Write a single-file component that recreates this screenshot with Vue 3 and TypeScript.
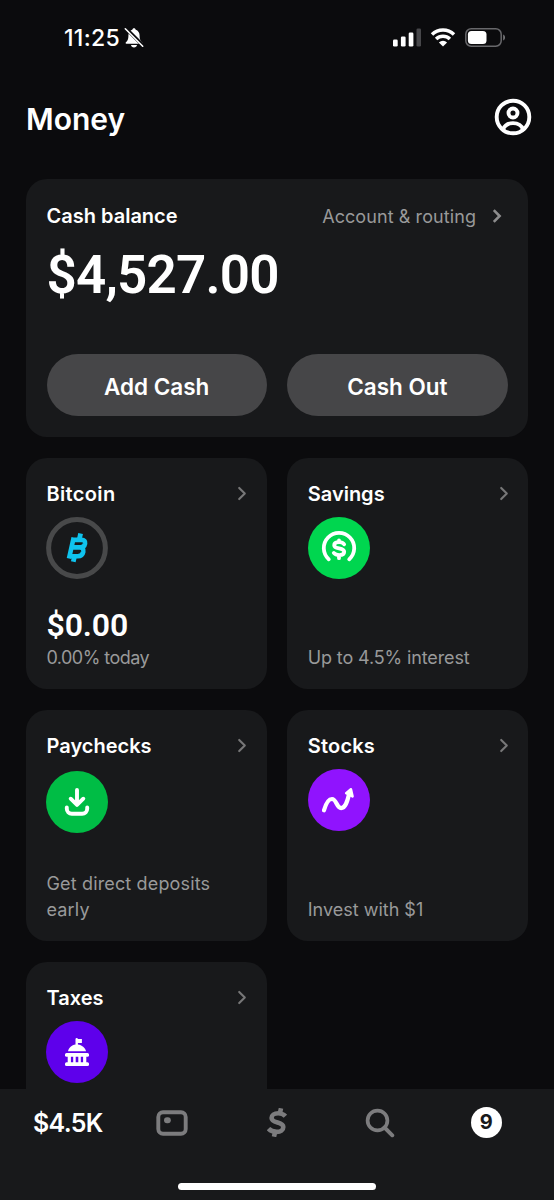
<script setup lang="ts">
type IconName = 'bitcoin' | 'savings' | 'paychecks' | 'stocks' | 'taxes'

interface Tile {
  id: IconName
  title: string
  amount?: string
  note?: string
}

const tiles: Tile[] = [
  { id: 'bitcoin', title: 'Bitcoin', amount: '$0.00', note: '0.00% today' },
  { id: 'savings', title: 'Savings', note: 'Up to 4.5% interest' },
  { id: 'paychecks', title: 'Paychecks', note: 'Get direct deposits early' },
  { id: 'stocks', title: 'Stocks', note: 'Invest with $1' },
  { id: 'taxes', title: 'Taxes' },
]
</script>

<template>
  <div class="screen">
    <div class="status">
      <div class="clock">
        <span>11:25</span>
        <svg class="bell" width="20" height="22" viewBox="0 0 20 22">
          <path d="M10 1.200c.9 0 1.600.6 1.700 1.500 2.500.8 3.900 3 3.900 5.800 0 4 .9 5.300 2.500 6.800.5.6.4 1.500-.5 1.500H2.400c-.9 0-1-.9-.5-1.500C3.500 13.800 4.400 12.500 4.400 8.500c0-2.800 1.400-5 3.900-5.800.1-.9.8-1.500 1.700-1.500z" fill="#fff" />
          <path d="M7 18h6c-.2 1.500-1.400 2.500-3 2.500S7.200 19.500 7 18z" fill="#fff" />
          <path d="M2 1.500l17.500 17.500" stroke="#0b0b0d" stroke-width="3.600" />
          <path d="M1.300 1.800l17.400 17.400" stroke="#fff" stroke-width="1.600" stroke-linecap="round" />
        </svg>
      </div>
      <div class="signals">
        <svg width="28" height="19" viewBox="0 0 28 19">
          <rect x="0" y="11.500" width="4.700" height="7" rx="1.300" fill="#fff" />
          <rect x="7.900" y="8.500" width="4.700" height="10" rx="1.300" fill="#fff" />
          <rect x="15.700" y="4.500" width="4.700" height="14" rx="1.300" fill="#fff" />
          <rect x="23.500" y=".5" width="4.500" height="18" rx="1.300" fill="#47474a" />
        </svg>
        <svg class="wifi" width="26" height="19" viewBox="0 0 26 19">
          <path d="M2 6.400a16 16 0 0 1 22 0M6.100 10.900a10 10 0 0 1 13.800 0" fill="none" stroke="#fff" stroke-width="3.500" />
          <path d="M13 18.600l-4.100-4.100a5.900 5.900 0 0 1 8.200 0z" fill="#fff" />
        </svg>
        <svg class="battery" width="41" height="19" viewBox="0 0 41 19">
          <rect x=".8" y=".8" width="35.400" height="17.400" rx="5.400" fill="none" stroke="#68686b" stroke-width="1.500" />
          <rect x="2.900" y="2.900" width="18.600" height="13.200" rx="3.600" fill="#fff" />
          <path d="M38.200 6.500c2.400.8 2.400 5.200 0 6z" fill="#77777a" />
        </svg>
      </div>
    </div>

    <header class="header">
      <h1>Money</h1>
      <svg width="38" height="38" viewBox="0 0 38 38" fill="none" stroke="#fff">
        <circle cx="19" cy="19" r="16.300" stroke-width="3.900" />
        <circle cx="19" cy="15" r="4.500" stroke-width="3.900" />
        <path d="M9 31.500c1.500-4.200 5-6.300 10-6.300s8.500 2.100 10 6.300" stroke-width="3.800" />
      </svg>
    </header>

    <main class="content">
      <section class="balance">
        <div class="balance-top">
          <h2>Cash balance</h2>
          <div class="routing">
            <span>Account &amp; routing</span>
            <svg width="10" height="15" viewBox="0 0 10 15">
              <path d="M1.800 1.200l5.800 5.800-5.800 5.800" fill="none" stroke="#8c8c8d" stroke-width="2.600" />
            </svg>
          </div>
        </div>
        <div class="total">$4,527.00</div>
        <div class="actions">
          <button>Add Cash</button>
          <button>Cash Out</button>
        </div>
      </section>

      <div class="grid">
        <section v-for="tile in tiles" :key="tile.id" class="tile">
          <div class="tile-head">
            <h3 :class="tile.id">{{ tile.title }}</h3>
            <svg width="10" height="15" viewBox="0 0 10 15">
              <path d="M2.200 1.900l5.600 5.600-5.600 5.600" fill="none" stroke="#777778" stroke-width="2.100" stroke-linecap="round" stroke-linejoin="round" />
            </svg>
          </div>
          <div class="disc" :class="'disc-' + tile.id">
            <svg v-if="tile.id === 'bitcoin'" width="62" height="62" viewBox="0 0 62 62" fill="none" stroke="#0fc3ee">
              <circle cx="31" cy="31" r="28.400" stroke="#48494a" stroke-width="5" />
              <path d="M26.500 22.900h9q4.200.1 3.600 3.600-.8 3.900-4.700 3.900h-7M34 30.400q4 .3 3.300 4.300-.9 4.500-5.500 4.500H22.500M27.700 20.600L23 41.500" stroke-width="4.600" />
              <path d="M34.600 16.500l-1.100 5M28.500 39.500l-1.200 5.200" stroke-width="4.800" />
            </svg>
            <svg v-else-if="tile.id === 'savings'" width="62" height="62" viewBox="0 0 62 62" fill="none" stroke="#fff" stroke-width="3.800" stroke-linecap="round">
              <path d="M20.800 42.300a15.200 15.200 0 1 1 20.400 0" />
              <path d="M36.100 27.300c-1-1.500-2.800-2.200-5-2.200-2.900 0-4.900 1.200-4.900 3.200 0 4.500 10 1.700 10 6.500 0 2.100-2 3.300-4.900 3.300-2.400 0-4.300-.7-5.500-2.200M31 23.500v1.500M31 38.200v3" />
            </svg>
            <svg v-else-if="tile.id === 'paychecks'" width="62" height="62" viewBox="0 0 62 62" fill="none" stroke="#fff" stroke-width="3.900" stroke-linecap="round" stroke-linejoin="round">
              <path d="M31 18.900v14.700M24.700 27.700l6.300 6.200 6.300-6.200M20.800 36.400v1.400a5 5 0 0 0 5 5h10.400a5 5 0 0 0 5-5v-1.400" />
            </svg>
            <svg v-else-if="tile.id === 'stocks'" width="62" height="62" viewBox="0 0 62 62" fill="none" stroke="#fff">
              <path d="M16 41.300C18.200 33.500 20.500 30 24 30c4.600 0 4.500 9.100 9.100 9.100 4.200 0 6.100-6 8-14" stroke-width="4.200" stroke-linecap="round" />
              <path d="M42.900 20.300l-4.700 3.900 6.300 3.200z" fill="#fff" stroke-width="2.600" stroke-linejoin="round" />
            </svg>
            <svg v-else width="62" height="62" viewBox="0 0 62 62" fill="#fff">
              <path d="M29.500 18.200q0-1.200 1.200-1.200t1.200 1h4v4h-4v1.500c4 .7 7.300 3.200 8.200 6.800H22c.8-3.600 3.700-6.100 7.500-6.800z" />
              <rect x="19" y="32" width="24" height="3.700" rx="1.500" />
              <rect x="19" y="41.200" width="24" height="3.800" rx="1.500" />
              <path d="M21.700 35h3.200v7h-3.200zM27.200 35h2.500v7h-2.500zM32.300 35h2.500v7h-2.500zM37.100 35h3.200v7h-3.200z" />
            </svg>
          </div>
          <div class="tile-foot">
            <div v-if="tile.amount" class="amount">{{ tile.amount }}</div>
            <p v-if="tile.note" :class="tile.id">{{ tile.note }}</p>
          </div>
        </section>
      </div>
    </main>

    <nav class="tabs">
      <div class="tab-row">
        <div class="tab tab-money">$4.5K</div>
        <div class="tab">
          <svg width="32" height="26" viewBox="0 0 32 26">
            <rect x="2.300" y="2.200" width="27.400" height="21.600" rx="4.700" fill="none" stroke="#7c7c7e" stroke-width="3.900" />
            <rect x="8" y="7.200" width="6.800" height="6" rx="3" fill="#7c7c7e" />
          </svg>
        </div>
        <div class="tab">
          <svg width="20" height="29" viewBox="0 0 20 29" fill="none" stroke="#7c7c7e">
            <path d="M18.400 8.200c-1.800-1.900-4.200-3-7.200-3-3.900 0-6.600 2-6.600 4.700 0 5.600 11.700 3.700 11.700 9 0 3.300-2.800 5-6.600 5-3.400 0-6.300-1.200-8.200-3.200" stroke-width="4.600" />
            <path d="M14 .3l-1 4.500M8 24.200l-1 4.500" stroke-width="4.600" />
          </svg>
        </div>
        <div class="tab tab-search">
          <svg width="30" height="30" viewBox="0 0 30 30" fill="none" stroke="#7c7c7e">
            <circle cx="12.500" cy="12.500" r="9.900" stroke-width="3.700" />
            <path d="M19.500 19.500l7.800 7.800" stroke-width="3.900" stroke-linecap="round" />
          </svg>
        </div>
        <div class="tab"><span class="badge">9</span></div>
      </div>
      <div class="home-bar"></div>
    </nav>
  </div>
</template>

<style>
body {
  margin: 0;
  background: #0b0b0d;
}
</style>

<style scoped>
.screen {
  width: 554px;
  height: 1200px;
  display: flex;
  flex-direction: column;
  overflow: hidden;
  background: #0b0b0d;
  color: #fff;
  font-family: Inter, "Liberation Sans", sans-serif;
}
svg {
  display: block;
  flex: none;
}
h1,
h2,
h3,
p {
  margin: 0;
}
.status {
  flex: none;
  height: 75px;
  box-sizing: border-box;
  padding: 0 48px 0 64px;
  display: flex;
  align-items: center;
  justify-content: space-between;
}
.clock {
  display: flex;
  align-items: center;
  gap: 4px;
  font-size: 23px;
  font-weight: 500;
  letter-spacing: 0.300px;
}
.signals {
  display: flex;
  align-items: center;
}
.wifi {
  margin-left: 9.500px;
}
.battery {
  margin-left: 9px;
}
.header {
  flex: none;
  height: 104px;
  box-sizing: border-box;
  padding: 22px 22.500px 0 26px;
  display: flex;
  justify-content: space-between;
}
.header h1 {
  font-size: 30px;
  line-height: 44px;
  font-weight: 600;
}
.header svg {
  margin-top: 1px;
}
.content {
  flex: 1;
  min-height: 0;
  overflow: hidden;
  padding: 0 26px;
}
.balance {
  height: 258px;
  box-sizing: border-box;
  border-radius: 21px;
  background: #18191b;
  padding: 24px 20.500px 21px;
  display: flex;
  flex-direction: column;
}
.balance-top {
  display: flex;
  justify-content: space-between;
}
.balance-top h2 {
  font-size: 20px;
  line-height: 26px;
  font-weight: 600;
}
.routing {
  display: flex;
  align-items: center;
  gap: 16px;
  padding-right: 5.500px;
  color: #99999a;
  font-size: 18px;
  line-height: 26px;
  letter-spacing: 0.080px;
}
.routing span {
  padding-top: 1px;
}
.total {
  margin-top: 13px;
  font-family: Roboto, Inter, sans-serif;
  font-size: 53px;
  line-height: 64px;
  font-weight: 600;
  letter-spacing: -0.800px;
}
.actions {
  margin-top: auto;
  display: grid;
  grid-template-columns: 1fr 1fr;
  gap: 20.500px;
}
.actions button {
  height: 62px;
  border: 0;
  padding: 2px 0 0;
  border-radius: 31px;
  background: #464648;
  color: #fff;
  font: inherit;
  font-size: 22.500px;
  font-weight: 600;
}
.grid {
  margin-top: 20.500px;
  display: grid;
  grid-template-columns: 1fr 1fr;
  grid-auto-rows: 231.200px;
  gap: 21px 20.500px;
}
.tile {
  box-sizing: border-box;
  border-radius: 21px;
  background: #18191b;
  padding: 23.500px 19.500px 18.200px 20.500px;
  display: flex;
  flex-direction: column;
}
.tile-head {
  display: flex;
  justify-content: space-between;
}
.tile-head h3 {
  font-size: 20px;
  line-height: 27px;
  font-weight: 600;
}
.tile-head .bitcoin {
  letter-spacing: 0.350px;
}
.tile-head .stocks {
  letter-spacing: 0.200px;
}
.tile-head svg {
  margin-top: 5px;
}
.disc {
  flex: none;
  width: 62px;
  height: 62px;
  margin-top: 8.500px;
  margin-left: -0.100px;
  border-radius: 50%;
}
.disc-savings {
  background: #00d64f;
}
.disc-paychecks {
  background: #00bd45;
  margin-top: 11px;
}
.disc-stocks {
  background: #9013fe;
}
.disc-taxes {
  background: #5e00eb;
}
.tile-foot {
  margin-top: auto;
}
.amount {
  margin-bottom: 1px;
  font-family: Roboto, Inter, sans-serif;
  font-size: 32px;
  line-height: 38px;
  font-weight: 600;
  letter-spacing: -0.100px;
}
.tile-foot p {
  color: #99999a;
  font-size: 18px;
  line-height: 26px;
}
.tile-foot .bitcoin {
  letter-spacing: -0.550px;
}
.tile-foot .savings {
  letter-spacing: -0.130px;
}
.tile-foot .paychecks {
  letter-spacing: 0.150px;
}
.tabs {
  flex: none;
  height: 111px;
  background: #18191b;
  display: flex;
  flex-direction: column;
  align-items: center;
}
.tab-row {
  width: 523px;
  height: 67px;
  display: grid;
  grid-template-columns: repeat(5, 1fr);
}
.tab {
  display: flex;
  align-items: center;
  justify-content: center;
}
.tab-money {
  padding-top: 1px;
  font-size: 25px;
  font-weight: 600;
  letter-spacing: -0.700px;
}
.tab-search {
  padding-right: 3px;
}
.badge {
  width: 31px;
  height: 31px;
  border-radius: 50%;
  background: #fff;
  color: #18191b;
  font-size: 20px;
  line-height: 31px;
  font-weight: 700;
  text-align: center;
}
.home-bar {
  width: 198px;
  height: 7px;
  margin-top: 27px;
  border-radius: 4px;
  background: #fff;
}
</style>
